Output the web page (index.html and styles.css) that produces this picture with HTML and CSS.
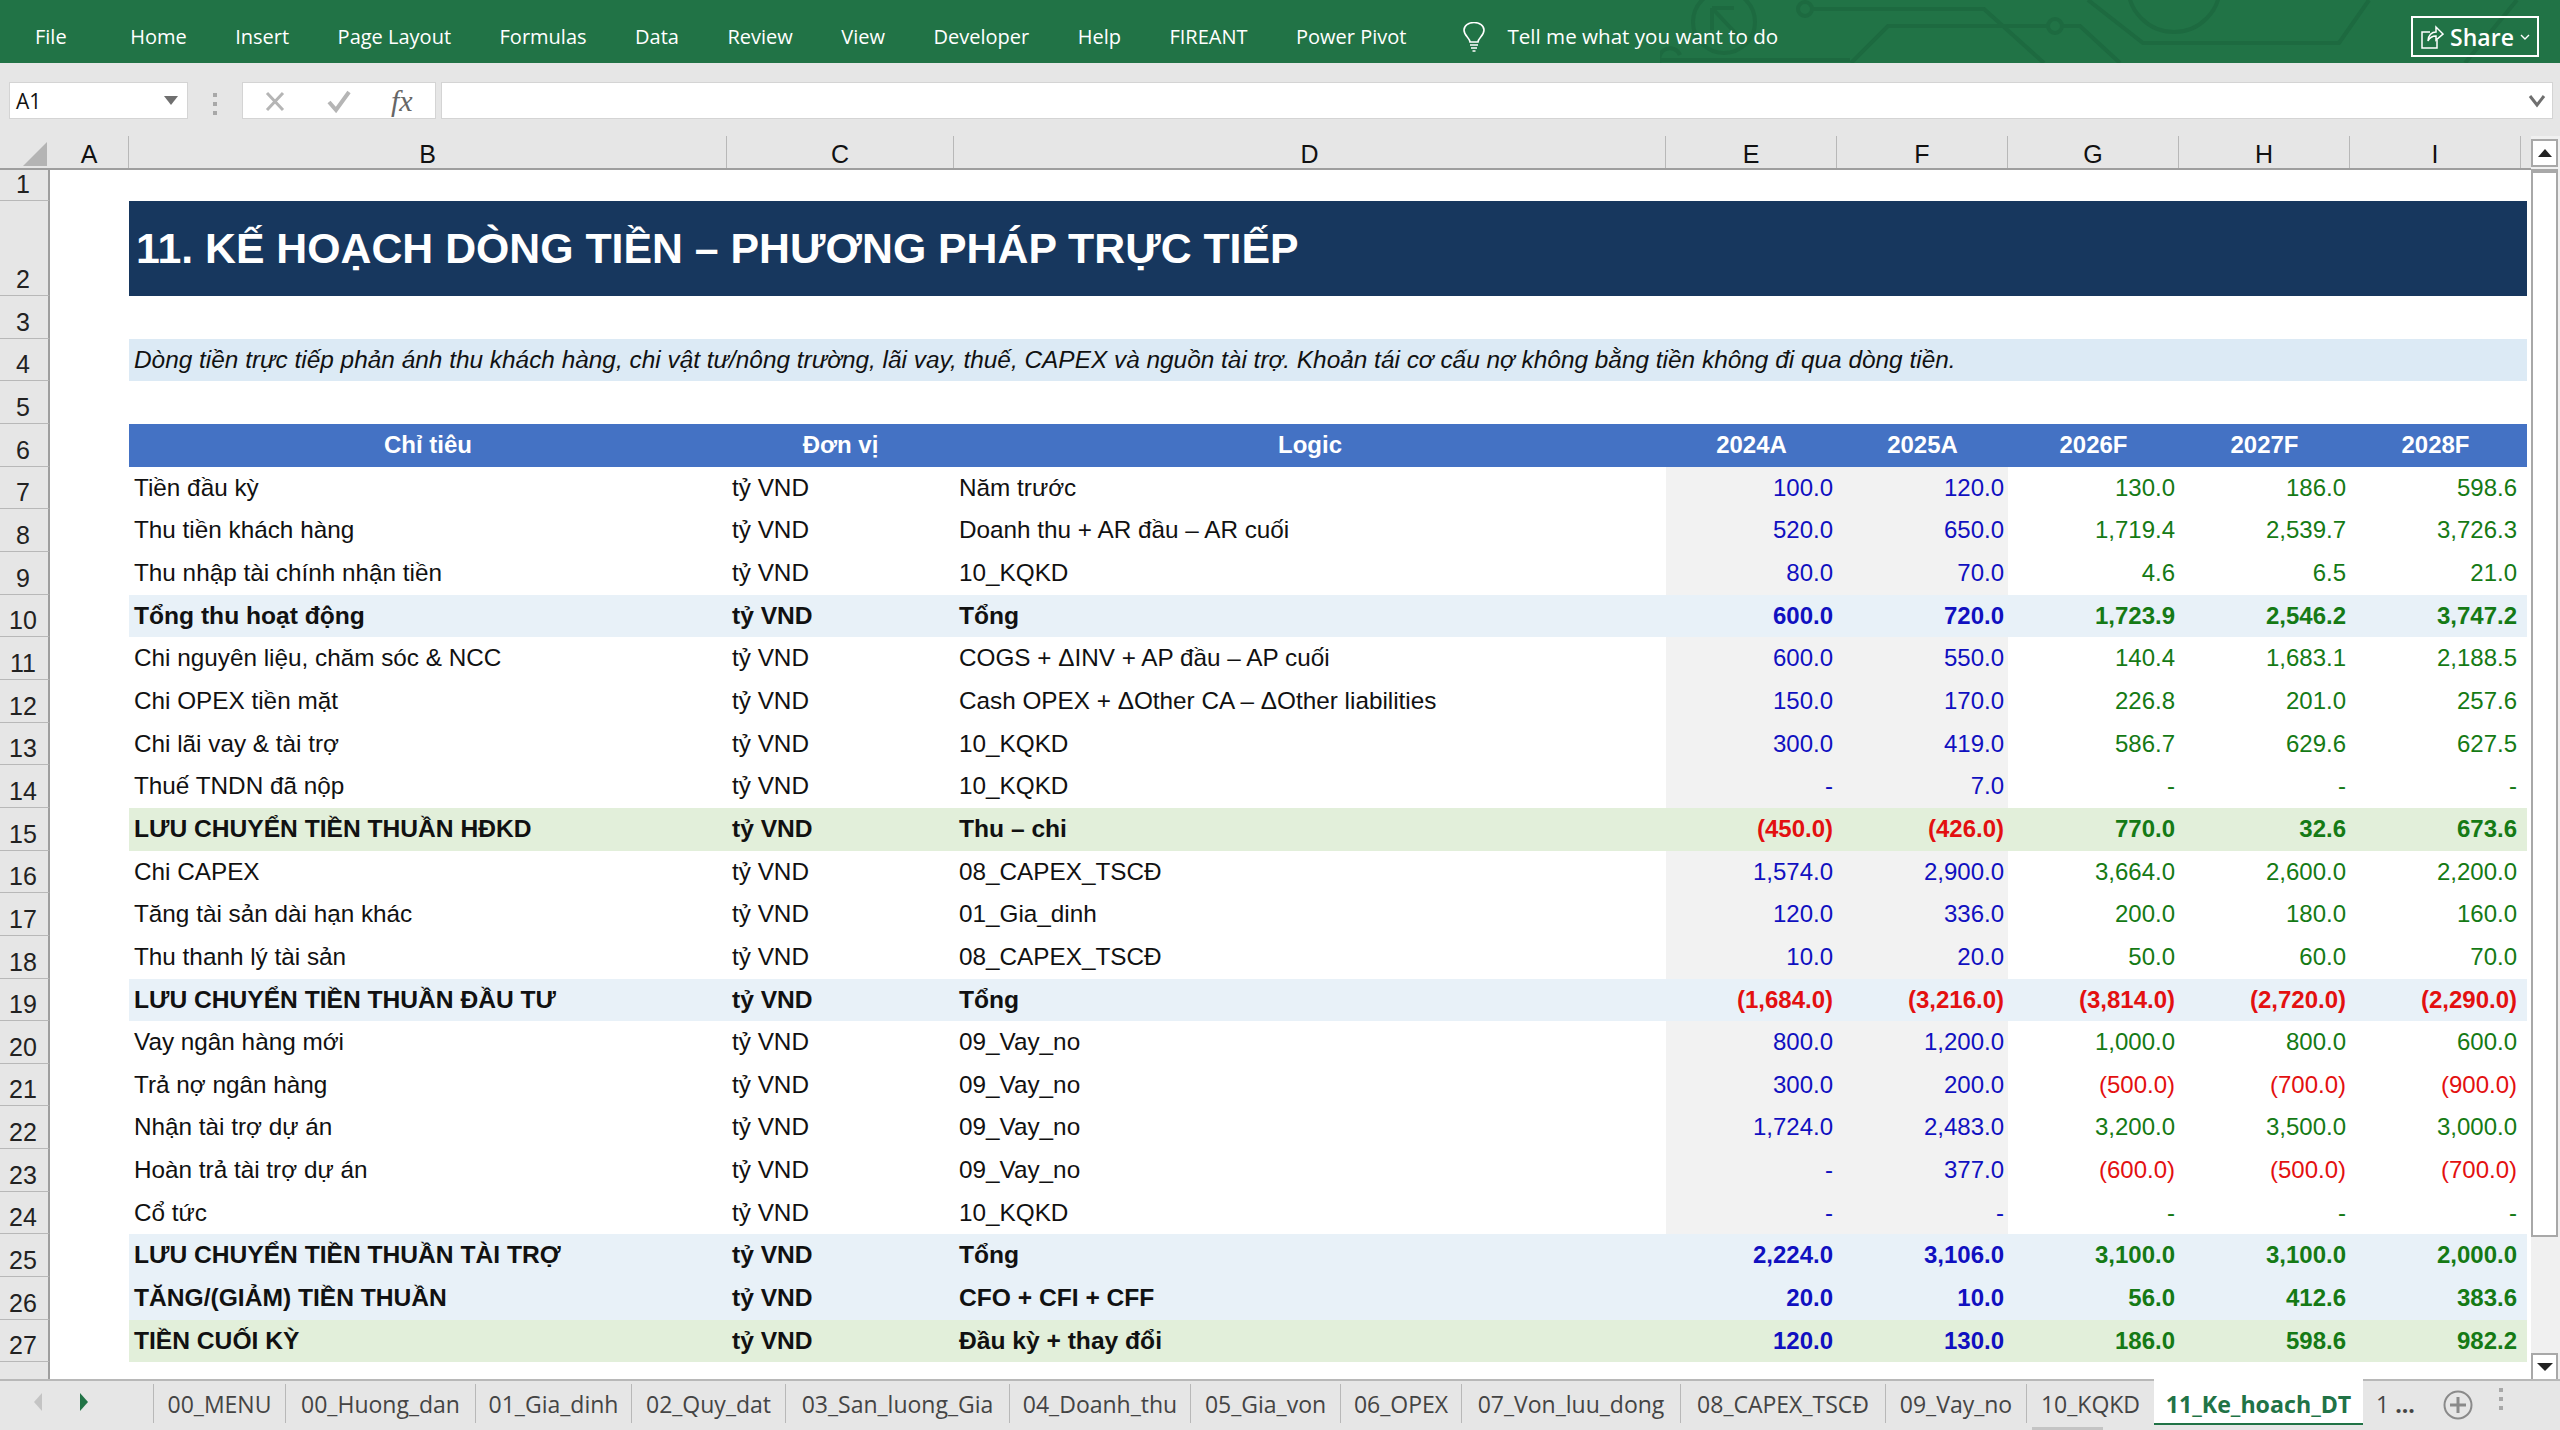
FILE: index.html
```html
<!DOCTYPE html>
<html lang="en">
<head>
    <meta charset="UTF-8">
    <title>11_Ke_hoach_DT - Excel</title>
    <link rel="stylesheet" href="styles.css">
</head>
<body>
<header class="ribbon">
    <svg class="circuit" width="900" height="63" viewBox="1660 0 900 63" fill="none">
        <circle cx="1724" cy="22" r="31"/>
        <path d="M1712 8v22M1712 8h22M1712 8l28 30"/>
        <circle cx="1805" cy="9" r="7"/>
        <path d="M1812 9h172l60 54"/>
        <circle cx="2055" cy="26" r="7"/>
        <path d="M2048 26h-160l-37 37M2062 26h18l40 37"/>
        <circle cx="2174" cy="-14" r="46"/>
        <path d="M2088 0l55 43h196l30-43M2465 63l52-63M1660 60h190M1660 63a10 10 0 0 1 20 -8"/>
    </svg>
    <nav class="menu">
        <a>File</a><a>Home</a><a>Insert</a><a>Page Layout</a><a>Formulas</a><a>Data</a><a>Review</a><a>View</a><a>Developer</a><a>Help</a><a>FIREANT</a><a>Power Pivot</a>
    </nav>
    <div class="tell">
        <svg width="24" height="30" viewBox="0 0 24 30" fill="none" stroke="#fff" stroke-width="1.6"><path d="M8 20c0-4-6-6-6-12a10 7.500 0 0 1 20 0c0 6-6 8-6 12z"/><path d="M8 23h8M9 26h6M10.500 29h3"/></svg>
        <span>Tell me what you want to do</span>
    </div>
    <button class="share">
        <svg width="24" height="28" viewBox="0 0 24 28" fill="none" stroke="#fff" stroke-width="1.5"><path d="M10 9H2v16h15v-8"/><path d="M8 18c0-6 4-9 8-9V4l7 7-7 6v-4c-3 0-6 1-8 5z"/></svg>
        <span>Share</span>
        <svg width="10" height="8" viewBox="0 0 10 8" fill="none" stroke="#fff" stroke-width="1.4"><path d="M1 2l4 4 4-4"/></svg>
    </button>
</header>

<div class="formula-bar">
    <div class="name-box"><span>A1</span><i class="caret"></i></div>
    <div class="grip"><b></b><b></b><b></b></div>
    <div class="fx-box">
        <svg width="24" height="24" viewBox="0 0 24 24" fill="none" stroke="#b5b5b5" stroke-width="3"><path d="M4 4l16 17M20 4L4 21"/></svg>
        <svg width="26" height="24" viewBox="0 0 26 24" fill="none" stroke="#b5b5b5" stroke-width="4"><path d="M3 13l7 8L23 3"/></svg>
        <span class="fx">fx</span>
    </div>
    <div class="formula-input">
        <svg width="18" height="14" viewBox="0 0 18 14" fill="none" stroke="#6f6f6f" stroke-width="3"><path d="M2 2l7 9 7-9"/></svg>
    </div>
</div>

<main class="sheet">
    <div class="grid">
        <div class="col-heads">
            <div class="corner"><i></i></div>
            <div>A</div><div>B</div><div>C</div><div>D</div><div>E</div><div>F</div><div>G</div><div>H</div><div>I</div>
        </div>

        <div class="row row-1"><div class="num">1</div></div>
        <div class="row row-2"><div class="num">2</div><div class="gap"></div><h1 class="title">11. KẾ HOẠCH DÒNG TIỀN – PHƯƠNG PHÁP TRỰC TIẾP</h1></div>
        <div class="row"><div class="num">3</div></div>
        <div class="row"><div class="num">4</div><div class="gap"></div><p class="note">Dòng tiền trực tiếp phản ánh thu khách hàng, chi vật tư/nông trường, lãi vay, thuế, CAPEX và nguồn tài trợ. Khoản tái cơ cấu nợ không bằng tiền không đi qua dòng tiền.</p></div>
        <div class="row"><div class="num">5</div></div>

        <div class="row"><div class="num">6</div><div class="gap"></div><div class="cells head"><span>Chỉ tiêu</span><span>Đơn vị</span><span>Logic</span><span>2024A</span><span>2025A</span><span>2026F</span><span>2027F</span><span>2028F</span></div></div>

        <div class="row"><div class="num">7</div><div class="gap"></div><div class="cells"><span>Tiền đầu kỳ</span><span>tỷ VND</span><span>Năm trước</span><span class="a">100.0</span><span class="a">120.0</span><span class="f">130.0</span><span class="f">186.0</span><span class="f">598.6</span></div></div>
        <div class="row"><div class="num">8</div><div class="gap"></div><div class="cells"><span>Thu tiền khách hàng</span><span>tỷ VND</span><span>Doanh thu + AR đầu – AR cuối</span><span class="a">520.0</span><span class="a">650.0</span><span class="f">1,719.4</span><span class="f">2,539.7</span><span class="f">3,726.3</span></div></div>
        <div class="row"><div class="num">9</div><div class="gap"></div><div class="cells"><span>Thu nhập tài chính nhận tiền</span><span>tỷ VND</span><span>10_KQKD</span><span class="a">80.0</span><span class="a">70.0</span><span class="f">4.6</span><span class="f">6.5</span><span class="f">21.0</span></div></div>
        <div class="row"><div class="num">10</div><div class="gap"></div><div class="cells sub"><span>Tổng thu hoạt động</span><span>tỷ VND</span><span>Tổng</span><span class="a">600.0</span><span class="a">720.0</span><span class="f">1,723.9</span><span class="f">2,546.2</span><span class="f">3,747.2</span></div></div>
        <div class="row"><div class="num">11</div><div class="gap"></div><div class="cells"><span>Chi nguyên liệu, chăm sóc &amp; NCC</span><span>tỷ VND</span><span>COGS + ΔINV + AP đầu – AP cuối</span><span class="a">600.0</span><span class="a">550.0</span><span class="f">140.4</span><span class="f">1,683.1</span><span class="f">2,188.5</span></div></div>
        <div class="row"><div class="num">12</div><div class="gap"></div><div class="cells"><span>Chi OPEX tiền mặt</span><span>tỷ VND</span><span>Cash OPEX + ΔOther CA – ΔOther liabilities</span><span class="a">150.0</span><span class="a">170.0</span><span class="f">226.8</span><span class="f">201.0</span><span class="f">257.6</span></div></div>
        <div class="row"><div class="num">13</div><div class="gap"></div><div class="cells"><span>Chi lãi vay &amp; tài trợ</span><span>tỷ VND</span><span>10_KQKD</span><span class="a">300.0</span><span class="a">419.0</span><span class="f">586.7</span><span class="f">629.6</span><span class="f">627.5</span></div></div>
        <div class="row"><div class="num">14</div><div class="gap"></div><div class="cells"><span>Thuế TNDN đã nộp</span><span>tỷ VND</span><span>10_KQKD</span><span class="a">-</span><span class="a">7.0</span><span class="f">-</span><span class="f">-</span><span class="f">-</span></div></div>
        <div class="row"><div class="num">15</div><div class="gap"></div><div class="cells total"><span>LƯU CHUYỂN TIỀN THUẦN HĐKD</span><span>tỷ VND</span><span>Thu – chi</span><span class="a neg">(450.0)</span><span class="a neg">(426.0)</span><span class="f">770.0</span><span class="f">32.6</span><span class="f">673.6</span></div></div>
        <div class="row"><div class="num">16</div><div class="gap"></div><div class="cells"><span>Chi CAPEX</span><span>tỷ VND</span><span>08_CAPEX_TSCĐ</span><span class="a">1,574.0</span><span class="a">2,900.0</span><span class="f">3,664.0</span><span class="f">2,600.0</span><span class="f">2,200.0</span></div></div>
        <div class="row"><div class="num">17</div><div class="gap"></div><div class="cells"><span>Tăng tài sản dài hạn khác</span><span>tỷ VND</span><span>01_Gia_dinh</span><span class="a">120.0</span><span class="a">336.0</span><span class="f">200.0</span><span class="f">180.0</span><span class="f">160.0</span></div></div>
        <div class="row"><div class="num">18</div><div class="gap"></div><div class="cells"><span>Thu thanh lý tài sản</span><span>tỷ VND</span><span>08_CAPEX_TSCĐ</span><span class="a">10.0</span><span class="a">20.0</span><span class="f">50.0</span><span class="f">60.0</span><span class="f">70.0</span></div></div>
        <div class="row"><div class="num">19</div><div class="gap"></div><div class="cells sub"><span>LƯU CHUYỂN TIỀN THUẦN ĐẦU TƯ</span><span>tỷ VND</span><span>Tổng</span><span class="a neg">(1,684.0)</span><span class="a neg">(3,216.0)</span><span class="f neg">(3,814.0)</span><span class="f neg">(2,720.0)</span><span class="f neg">(2,290.0)</span></div></div>
        <div class="row"><div class="num">20</div><div class="gap"></div><div class="cells"><span>Vay ngân hàng mới</span><span>tỷ VND</span><span>09_Vay_no</span><span class="a">800.0</span><span class="a">1,200.0</span><span class="f">1,000.0</span><span class="f">800.0</span><span class="f">600.0</span></div></div>
        <div class="row"><div class="num">21</div><div class="gap"></div><div class="cells"><span>Trả nợ ngân hàng</span><span>tỷ VND</span><span>09_Vay_no</span><span class="a">300.0</span><span class="a">200.0</span><span class="f neg">(500.0)</span><span class="f neg">(700.0)</span><span class="f neg">(900.0)</span></div></div>
        <div class="row"><div class="num">22</div><div class="gap"></div><div class="cells"><span>Nhận tài trợ dự án</span><span>tỷ VND</span><span>09_Vay_no</span><span class="a">1,724.0</span><span class="a">2,483.0</span><span class="f">3,200.0</span><span class="f">3,500.0</span><span class="f">3,000.0</span></div></div>
        <div class="row"><div class="num">23</div><div class="gap"></div><div class="cells"><span>Hoàn trả tài trợ dự án</span><span>tỷ VND</span><span>09_Vay_no</span><span class="a">-</span><span class="a">377.0</span><span class="f neg">(600.0)</span><span class="f neg">(500.0)</span><span class="f neg">(700.0)</span></div></div>
        <div class="row"><div class="num">24</div><div class="gap"></div><div class="cells"><span>Cổ tức</span><span>tỷ VND</span><span>10_KQKD</span><span class="a">-</span><span class="a">-</span><span class="f">-</span><span class="f">-</span><span class="f">-</span></div></div>
        <div class="row"><div class="num">25</div><div class="gap"></div><div class="cells sub"><span>LƯU CHUYỂN TIỀN THUẦN TÀI TRỢ</span><span>tỷ VND</span><span>Tổng</span><span class="a">2,224.0</span><span class="a">3,106.0</span><span class="f">3,100.0</span><span class="f">3,100.0</span><span class="f">2,000.0</span></div></div>
        <div class="row"><div class="num">26</div><div class="gap"></div><div class="cells sub"><span>TĂNG/(GIẢM) TIỀN THUẦN</span><span>tỷ VND</span><span>CFO + CFI + CFF</span><span class="a">20.0</span><span class="a">10.0</span><span class="f">56.0</span><span class="f">412.6</span><span class="f">383.6</span></div></div>
        <div class="row"><div class="num">27</div><div class="gap"></div><div class="cells total"><span>TIỀN CUỐI KỲ</span><span>tỷ VND</span><span>Đầu kỳ + thay đổi</span><span class="a">120.0</span><span class="a">130.0</span><span class="f">186.0</span><span class="f">598.6</span><span class="f">982.2</span></div></div>
        <div class="row-rest"><div class="num"></div></div>
    </div>

    <aside class="vscroll">
        <div class="scroll-btn"><i class="up"></i></div>
        <div class="thumb"></div>
        <div class="scroll-btn"><i class="down"></i></div>
    </aside>
</main>

<footer class="tabbar">
    <div class="tab-nav"><i class="prev"></i><i class="next"></i></div>
    <div class="tabs">
        <a>00_MENU</a><a>00_Huong_dan</a><a>01_Gia_dinh</a><a>02_Quy_dat</a><a>03_San_luong_Gia</a><a>04_Doanh_thu</a><a>05_Gia_von</a><a>06_OPEX</a><a>07_Von_luu_dong</a><a>08_CAPEX_TSCĐ</a><a>09_Vay_no</a><a>10_KQKD</a><a class="active">11_Ke_hoach_DT</a>
    </div>
    <div class="tab-more">1 <b>...</b></div>
    <svg class="tab-add" width="30" height="30" viewBox="0 0 30 30" fill="none" stroke="#8a8a8a"><circle cx="15" cy="15" r="13.500" stroke-width="2"/><path d="M15 7v16M7 15h16" stroke-width="3"/></svg>
    <div class="grip tab-grip"><b></b><b></b><b></b></div>
    <div class="hnub"></div>
</footer>
</body>
</html>
```

FILE: styles.css
```css
:root {
    --chrome: #e6e6e6;
    --line: #b8b8b8;
    --green: #217346;
    --blue-text: #1010c0;
    --green-text: #157a15;
    --red-text: #e31010;
    --row-h: 42.67px;
}

* {
    box-sizing: border-box;
}

html, body {
    margin: 0;
    height: 1430px;
    overflow: hidden;
}

body {
    background: var(--chrome);
    font-family: "Liberation Sans", Arial, sans-serif;
    color: #111;
}

/* ribbon */
.ribbon {
    height: 63px;
    padding-top: 10px;
    background: var(--green);
    color: #fff;
    display: flex;
    align-items: center;
    position: relative;
    font-family: "Open Sans", sans-serif;
    font-size: 20px;
}

.circuit {
    position: absolute;
    left: 1660px;
    top: 0;
}

.circuit circle,
.circuit path {
    stroke: #1d6a40;
    stroke-width: 4;
}

.menu {
    display: flex;
    gap: 48.500px;
    margin-left: 35px;
    position: relative;
}

.menu a:first-child {
    margin-right: 15px;
}

.tell {
    display: flex;
    align-items: center;
    gap: 21px;
    margin-left: 56px;
    position: relative;
    font-size: 20.600px;
}

.tell span {
    margin-top: -2px;
}

.share {
    margin-left: auto;
    margin-right: 21px;
    width: 128px;
    height: 41px;
    border: 2px solid #fff;
    background: none;
    color: #fff;
    font: 600 23px "Open Sans", sans-serif;
    display: flex;
    align-items: center;
    justify-content: center;
    gap: 6px;
    padding: 0;
    position: relative;
}

/* formula bar */
.formula-bar {
    height: 73px;
    display: flex;
    align-items: flex-start;
    padding: 19px 7px 0 9px;
    font-family: "Open Sans", sans-serif;
}

.name-box,
.fx-box,
.formula-input {
    height: 37px;
    background: #fff;
    border: 1px solid #d4d4d4;
    display: flex;
    align-items: center;
}

.name-box {
    width: 179px;
    padding: 0 9px 0 6px;
    justify-content: space-between;
    font-size: 21px;
}

.caret {
    border: 7px solid transparent;
    border-top: 9px solid #6f6f6f;
    border-bottom: 0;
}

.grip {
    width: 54px;
    display: flex;
    flex-direction: column;
    align-items: center;
    gap: 5px;
    padding-top: 11px;
}

.grip b {
    width: 4px;
    height: 4px;
    background: #a8a8a8;
}

.fx-box {
    width: 194px;
    padding-left: 20px;
    gap: 38px;
}

.fx-box svg + svg {
    margin-left: 1px;
}

.fx {
    font: italic 30px "Liberation Serif", serif;
    color: #666;
    margin-left: 1px;
}

.formula-input {
    flex: 1;
    margin-left: 5px;
    justify-content: flex-end;
    padding-right: 6px;
}

/* sheet */
.sheet {
    height: 1243px;
    display: flex;
}

.grid {
    width: 2531px;
    background: #fff;
    display: flex;
    flex-direction: column;
    font-size: 24.300px;
}

.col-heads {
    height: 34px;
    flex: none;
    display: grid;
    grid-template-columns: 50px 79px 598px 227px 712px repeat(5, 171px);
    background: var(--chrome);
    border-bottom: 2px solid #9e9e9e;
    text-align: center;
    line-height: 34px;
    font-size: 25px;
}

.col-heads div + div {
    border-right: 1px solid var(--line);
    height: 32px;
    padding-top: 1px;
}

.corner {
    position: relative;
}

.corner i {
    position: absolute;
    left: 23px;
    top: 6px;
    width: 0;
    height: 0;
    border-left: 24px solid transparent;
    border-bottom: 24px solid #b4b4b4;
}

.row {
    height: var(--row-h);
    flex: none;
    display: flex;
}

.row-1 {
    height: 31px;
}

.row-2 {
    height: 95px;
}

.num {
    width: 50px;
    flex: none;
    background: var(--chrome);
    border-right: 2px solid #9e9e9e;
    border-bottom: 1px solid var(--line);
    text-align: center;
    display: flex;
    align-items: flex-end;
    justify-content: center;
    line-height: 32px;
    font-size: 25px;
    color: #222;
    padding-right: 2px;
}

.gap {
    width: 79px;
    flex: none;
}

.title {
    width: 2398px;
    margin: 0;
    background: #17375e;
    color: #fff;
    font-size: 42.800px;
    font-weight: 700;
    display: flex;
    align-items: center;
    padding-left: 7px;
}

.note {
    width: 2398px;
    margin: 0;
    background: #dceaf5;
    font-style: italic;
    font-size: 24.400px;
    display: flex;
    align-items: center;
    padding-left: 5px;
}

.cells {
    width: 2398px;
    display: grid;
    grid-template-columns: 598px 227px 712px repeat(5, 171px) 6px;
    align-items: stretch;
}

.cells span {
    padding: 0 5px;
    line-height: var(--row-h);
    white-space: nowrap;
}

.cells .a,
.cells .f {
    text-align: right;
    padding-right: 4px;
    font-size: 24px;
}

.a {
    color: var(--blue-text);
    background: #f2f2f2;
}

.f {
    color: var(--green-text);
}

.cells .neg {
    color: var(--red-text);
}

.head {
    background: #4472c4;
}

.head span {
    color: #fff;
    font-weight: 700;
    text-align: center;
    font-size: 24px;
}

.sub,
.total {
    font-weight: 700;
    font-size: 24.600px;
}

.sub {
    background: #e8f1f8;
}

.total {
    background: #e2efda;
}

.sub .a,
.total .a {
    background: none;
}

.row-rest {
    flex: 1;
    display: flex;
}

.row-rest .num {
    border-bottom: 0;
}

/* scrollbar */
.vscroll {
    flex: 1;
    display: flex;
    flex-direction: column;
    padding: 3px 2px 0 0;
    background: #f0f0f0;
}

.scroll-btn {
    height: 28px;
    flex: none;
    background: #fff;
    border: 2px solid #a8a8a8;
    display: flex;
    align-items: center;
    justify-content: center;
}

.up {
    border: 7px solid transparent;
    border-bottom: 8px solid #222;
    border-top: 0;
}

.down {
    border: 8px solid transparent;
    border-top: 8px solid #222;
    border-bottom: 0;
}

.thumb {
    height: 1068px;
    margin-top: 2px;
    margin-bottom: 116px;
    background: #fff;
    border: 2px solid #a8a8a8;
    border-top-width: 4px;
    flex: none;
}

/* sheet tabs */
.tabbar {
    height: 51px;
    border-top: 2px solid var(--line);
    display: flex;
    position: relative;
    font-family: "Open Sans", sans-serif;
    font-size: 23px;
    color: #444;
}

.tab-nav {
    width: 153px;
    flex: none;
    position: relative;
}

.prev,
.next {
    position: absolute;
    top: 12px;
    border: 8px solid transparent;
    border-top-width: 9px;
    border-bottom-width: 9px;
}

.prev {
    left: 34px;
    border-right: 8px solid #c4c4c4;
    border-left: 0;
}

.next {
    left: 80px;
    border-left: 8px solid var(--green);
    border-right: 0;
}

.tabs {
    display: grid;
    grid-template-columns: 132px 190px 156px 154px 224px 181px 150px 121px 219px 205px 141px 128px 209px;
    height: 45px;
    flex: none;
}

.tabs a {
    text-align: center;
    border-left: 1px solid var(--line);
    line-height: 40px;
    margin-top: 3px;
    height: 39px;
    white-space: nowrap;
}

.tabs .active {
    background: #fff;
    color: var(--green);
    font-weight: 700;
    font-size: 23.200px;
    margin-top: -2px;
    height: 46px;
    line-height: 51px;
    border-bottom: 2px solid var(--green);
    border-left: 0;
}

.tab-more {
    margin-left: 13px;
    line-height: 46px;
}

.tab-add {
    position: absolute;
    left: 2443px;
    top: 9px;
}

.tab-grip {
    position: absolute;
    left: 2474px;
    top: -4px;
}

.hnub {
    position: absolute;
    left: 2032px;
    bottom: 0;
    width: 71px;
    height: 3px;
    background: #c4c4c4;
}
```
